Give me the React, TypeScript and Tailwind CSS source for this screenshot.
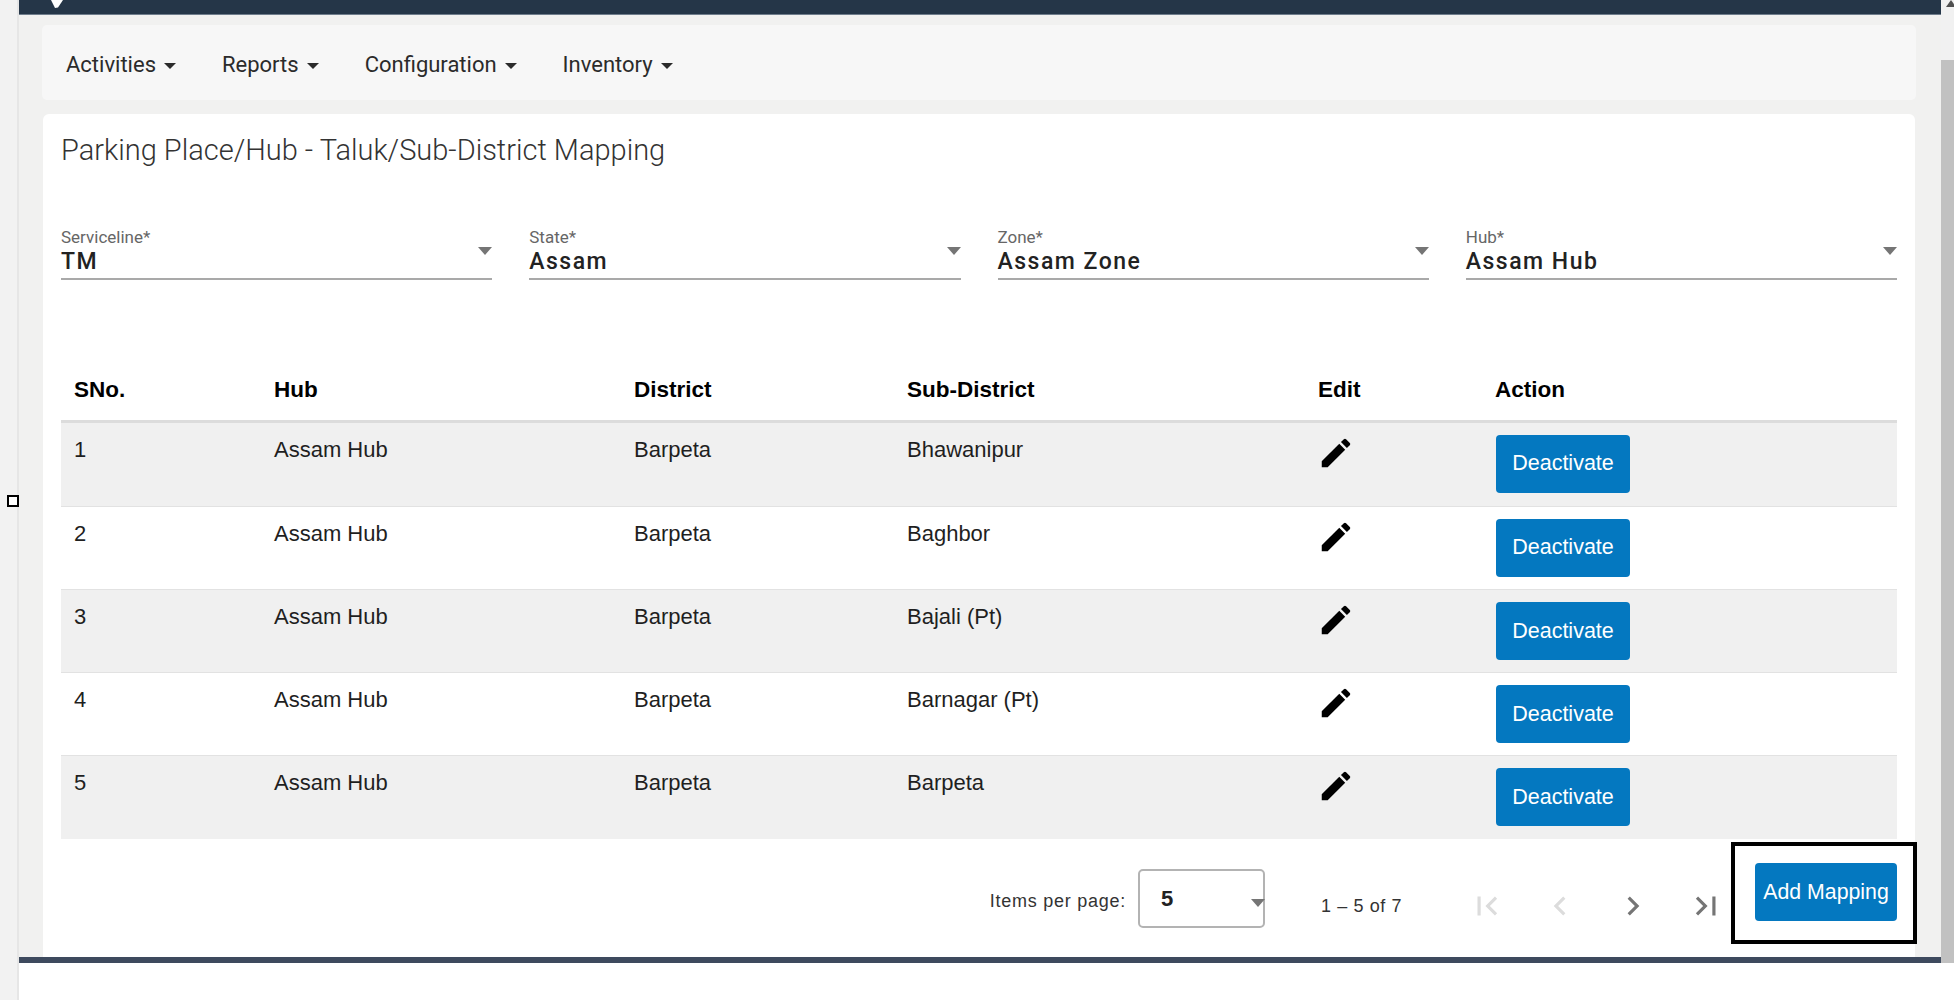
import { MdChevronLeft, MdChevronRight, MdEdit, MdFirstPage, MdLastPage } from "react-icons/md";

const navItems = ["Activities", "Reports", "Configuration", "Inventory"];

const fields = [
  { label: "Serviceline*", value: "TM" },
  { label: "State*", value: "Assam" },
  { label: "Zone*", value: "Assam Zone" },
  { label: "Hub*", value: "Assam Hub" },
];

const rows = [
  { no: 1, sub: "Bhawanipur" },
  { no: 2, sub: "Baghbor" },
  { no: 3, sub: "Bajali (Pt)" },
  { no: 4, sub: "Barnagar (Pt)" },
  { no: 5, sub: "Barpeta" },
];

function Arrow() {
  return <span className="mt-[19px] h-0 w-0 shrink-0 border-x-[7px] border-t-[8px] border-x-transparent border-t-[#757575]" />;
}

export default function App() {
  return (
    <div className="relative flex h-screen overflow-hidden bg-white font-['Liberation_Sans',sans-serif]">
      {/* LEFT RAIL */}
      <div className="w-[19px] shrink-0 border-r-2 border-[#e6e6e6] bg-[#f2f2f2]" />
      <div className="absolute left-[7px] top-[495px] h-[12px] w-[12px] border-2 border-black bg-white" />

      {/* MAIN */}
      <div className="flex min-w-0 flex-1 flex-col">
        <header className="relative h-[15px] shrink-0 border-b border-[#6f7d8c] bg-[#253648]">
          <svg className="absolute left-[32px] top-0" width="12" height="8" viewBox="0 0 12 8">
            <path d="M0 0h12L7 7.5 4 8z" fill="#fff" />
          </svg>
        </header>

        <main className="flex min-h-0 flex-1 flex-col bg-[#f1f1f0] pl-[24px] pr-[26px] pt-[10px]">
          {/* NAV */}
          <nav className="-ml-px -mr-px flex h-[75px] shrink-0 items-center gap-[46px] rounded-[5px] bg-[#f7f7f7] pl-[24px] pt-[4px] font-['Roboto',sans-serif] text-[22px] text-[#2b2b2b]">
            {navItems.map((item) => (
              <div key={item} className="flex items-center gap-[8px]">
                <span>{item}</span>
                <span className="mt-[2px] h-0 w-0 border-x-[6px] border-t-[6px] border-x-transparent border-t-[#2b2b2b]" />
              </div>
            ))}
          </nav>

          {/* CARD */}
          <section className="mt-[14px] flex min-h-0 flex-1 flex-col rounded-t-[6px] bg-white px-[18px] pt-[19px]">
            <h1 className="font-['Roboto',sans-serif] text-[29px] font-light leading-[34px] text-[#333]">
              Parking Place/Hub - Taluk/Sub-District Mapping
            </h1>

            {/* FILTERS */}
            <div className="mt-[61px] grid grid-cols-4 gap-[37px]">
              {fields.map((f) => (
                <div key={f.label} className="flex justify-between border-b-2 border-[#a9a9a9] pb-[3px] font-['Roboto',sans-serif]">
                  <div>
                    <div className="text-[17px] leading-[18px] text-[#666]">{f.label}</div>
                    <div className="mt-[3px] text-[23px] font-medium leading-[26px] tracking-[1.5px] text-[#222]">{f.value}</div>
                  </div>
                  <Arrow />
                </div>
              ))}
            </div>

            {/* TABLE */}
            <table className="mt-[78px] w-full table-fixed text-[22px] text-[#1f1f1f]">
              <colgroup>
                <col className="w-[200px]" />
                <col className="w-[360px]" />
                <col className="w-[273px]" />
                <col className="w-[411px]" />
                <col className="w-[177px]" />
                <col />
              </colgroup>
              <thead>
                <tr className="h-[63px] border-b-[3px] border-[#dcdcdc] text-left text-[22.5px] font-bold text-black">
                  {["SNo.", "Hub", "District", "Sub-District", "Edit", "Action"].map((h) => (
                    <th key={h} className="pl-[13px] pt-[3px] font-bold">{h}</th>
                  ))}
                </tr>
              </thead>
              <tbody>
                {rows.map((r) => (
                  <tr key={r.no} className="h-[83.25px] border-b border-[#e2e2e2] align-top first:h-[85px] odd:bg-[#f0f0f0] last:border-b-0">
                    <td className="pl-[13px] pt-[14px] leading-[26px]">{r.no}</td>
                    <td className="pl-[13px] pt-[14px] leading-[26px]">Assam Hub</td>
                    <td className="pl-[13px] pt-[14px] leading-[26px]">Barpeta</td>
                    <td className="pl-[13px] pt-[14px] leading-[26px]">{r.sub}</td>
                    <td className="pl-[12px] pt-[11px]">
                      <MdEdit size={38} className="text-black" />
                    </td>
                    <td className="pl-[14px] pt-[12px]">
                      <button type="button" className="h-[58px] w-[134px] rounded-[4px] bg-[#0478c0] text-[21.5px] text-white">
                        Deactivate
                      </button>
                    </td>
                  </tr>
                ))}
              </tbody>
            </table>

            {/* PAGINATION */}
            <div className="flex flex-1 items-start justify-end">
              <span className="mr-[12px] mt-[51px] text-[18px] leading-[22px] tracking-[0.75px] text-[#333]">Items per page:</span>
              <div className="mt-[30px] flex h-[59px] w-[127px] justify-between rounded-[5px] border-2 border-[#b3b3b3] pl-[21px]">
                <span className="mt-[15px] text-[22px] font-bold leading-[26px] text-[#222]">5</span>
                <span className="-mr-[2px] mt-[28px] h-0 w-0 border-x-[7px] border-t-[8px] border-x-transparent border-t-[#757575]" />
              </div>
              <span className="ml-[56px] mt-[56px] w-[147px] text-[18px] leading-[22px] tracking-[0.6px] text-[#333]">1 – 5 of 7</span>
              <div className="mt-[48px] flex gap-[35px] text-[#757575]">
                <MdFirstPage size={38} className="text-[#dcdcdc]" />
                <MdChevronLeft size={38} className="text-[#dcdcdc]" />
                <MdChevronRight size={38} />
                <MdLastPage size={38} />
              </div>
              <div className="-mr-[20px] ml-[6px] mt-[3px] border-4 border-black pb-[19px] pl-[20px] pr-[16px] pt-[17px]">
                <button type="button" className="block h-[58px] w-[142px] rounded-[4px] bg-[#0478c0] pt-[1px] text-[21.3px] text-white">
                  Add Mapping
                </button>
              </div>
            </div>
          </section>
        </main>

        <div className="h-[6px] shrink-0 bg-[#3e4a5e]" />
        <div className="h-[37px] shrink-0 bg-white" />
      </div>

      {/* SCROLLBAR */}
      <div className="flex h-[963px] w-[13px] shrink-0 flex-col bg-[#f1f1f1]">
        <span className="ml-[5px] h-0 w-0 border-x-[5px] border-b-[7px] border-x-transparent border-b-[#505050]" />
        <div className="mt-[53px] flex-1 bg-[#c1c1c1]" />
      </div>
    </div>
  );
}
